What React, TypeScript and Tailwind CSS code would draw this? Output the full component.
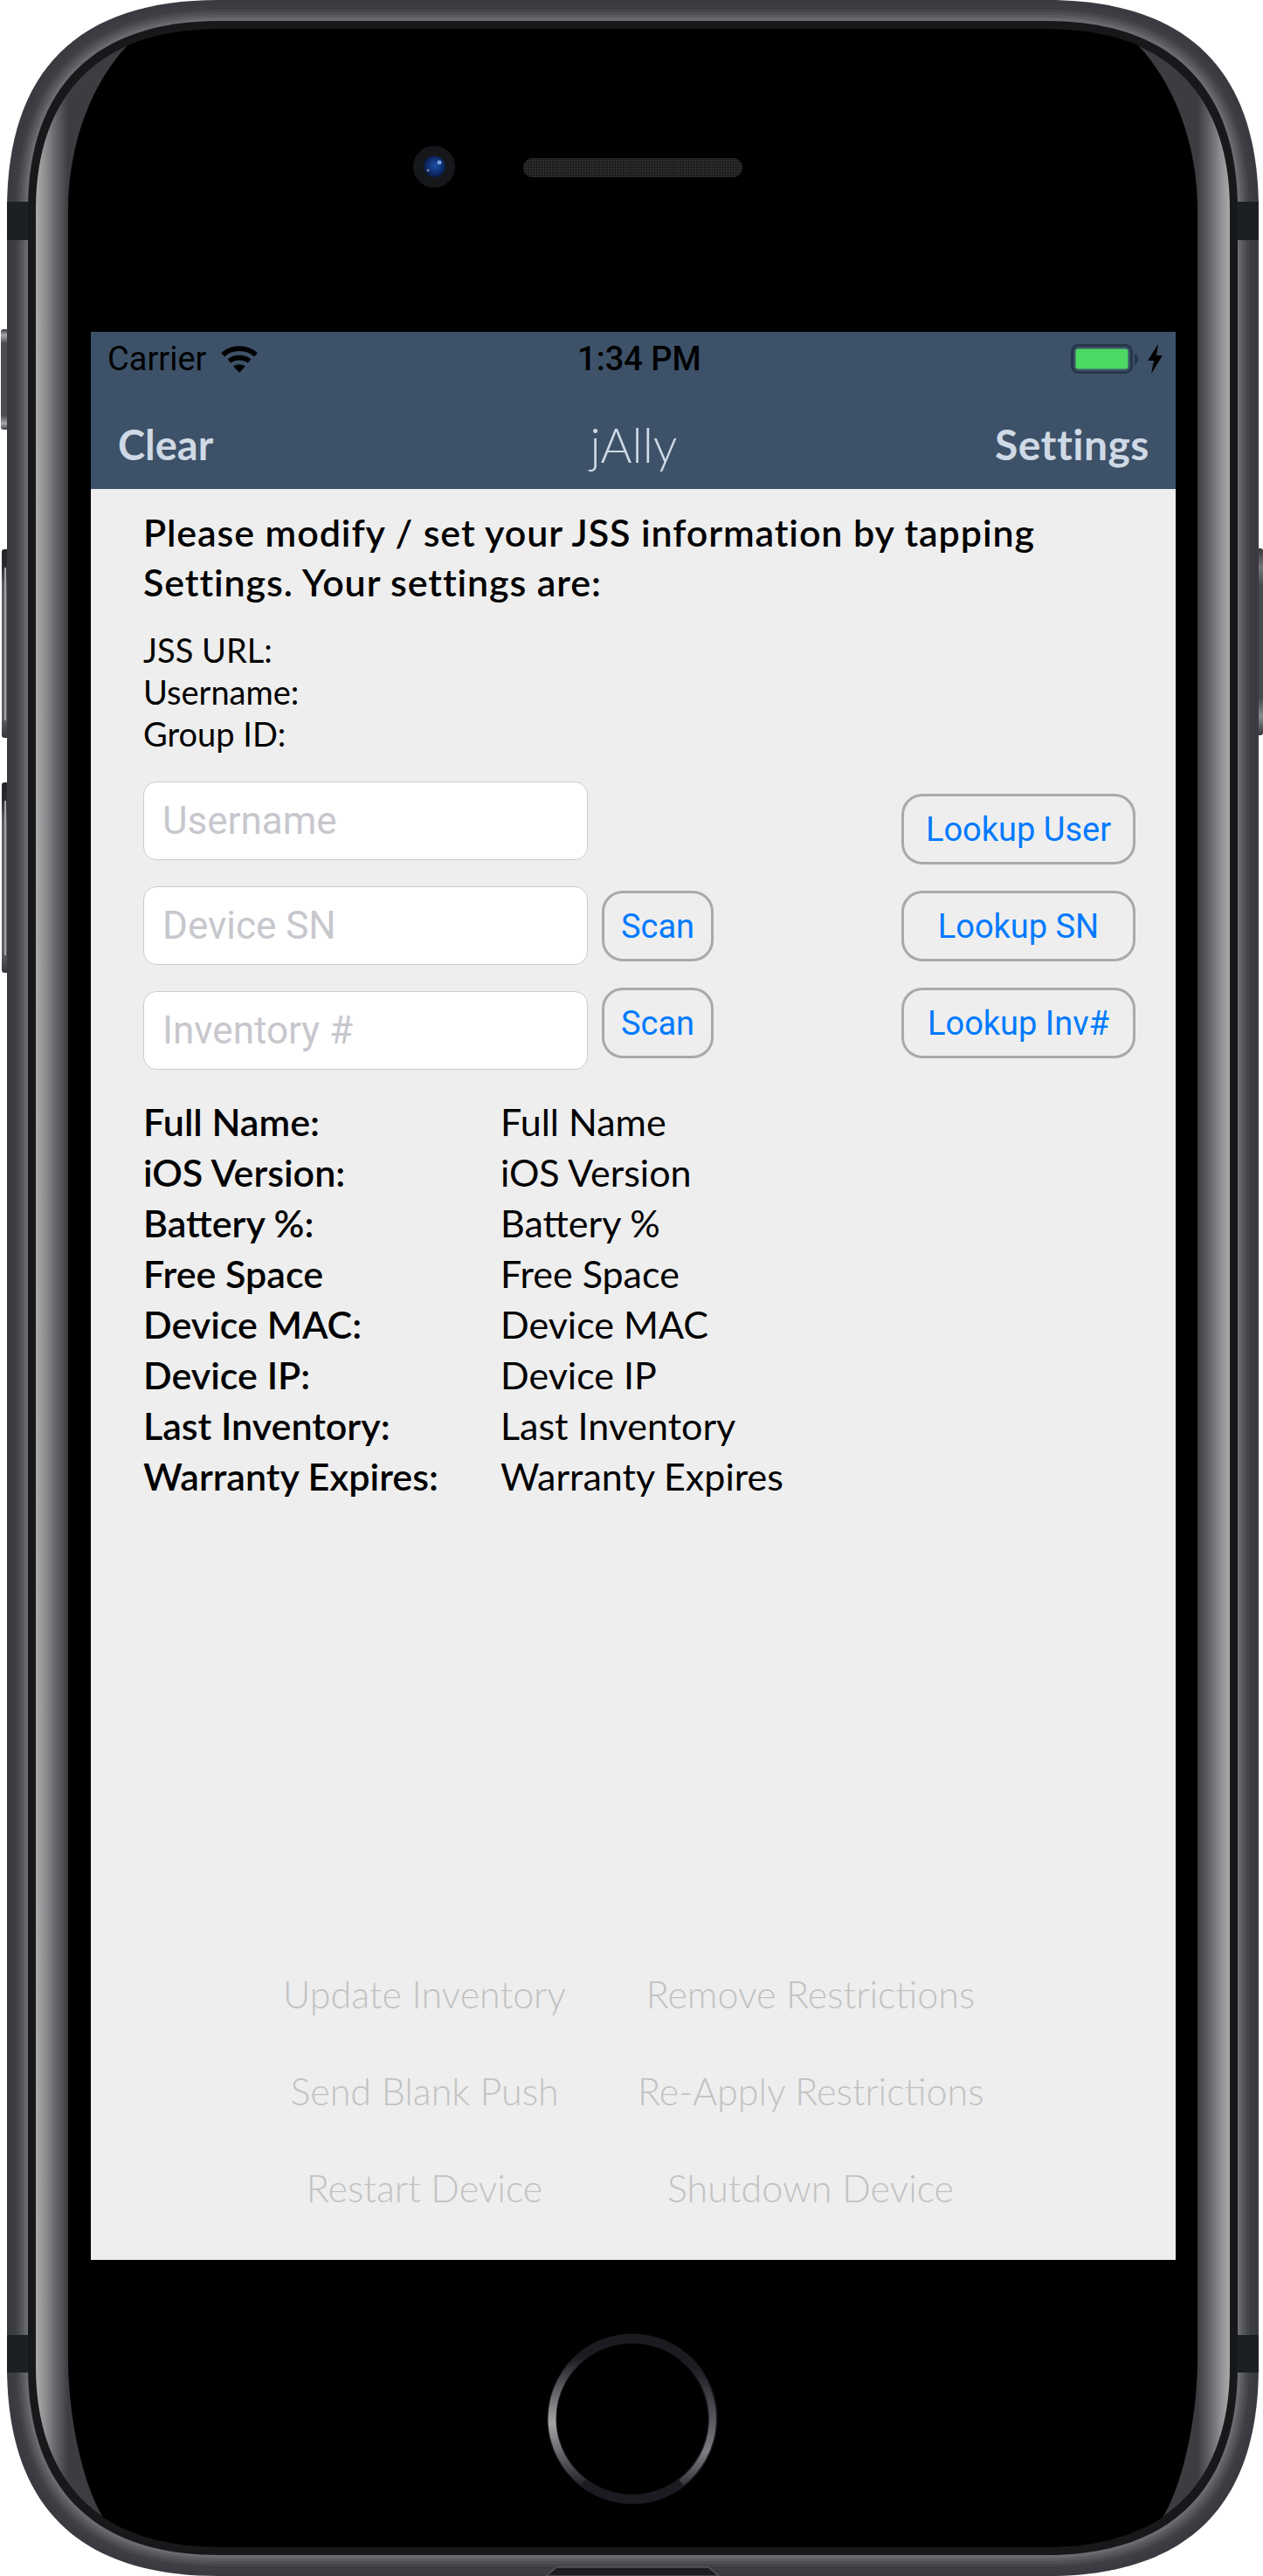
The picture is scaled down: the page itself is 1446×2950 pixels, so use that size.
const avenir = "font-['Lato',sans-serif]";
const system = "font-['Roboto',sans-serif]";

const infoRows = ["JSS URL:", "Username:", "Group ID:"];

const deviceRows = [
  ["Full Name:", "Full Name"],
  ["iOS Version:", "iOS Version"],
  ["Battery %:", "Battery %"],
  ["Free Space", "Free Space"],
  ["Device MAC:", "Device MAC"],
  ["Device IP:", "Device IP"],
  ["Last Inventory:", "Last Inventory"],
  ["Warranty Expires:", "Warranty Expires"],
];

const actions = [
  ["Update Inventory", "Remove Restrictions"],
  ["Send Blank Push", "Re-Apply Restrictions"],
  ["Restart Device", "Shutdown Device"],
];

// outline of the phone body, i pixels in from the outer edge
const bezel = (i: number) => {
  const l = 8 + i;
  const r = 1441 - i;
  const t = i;
  const b = 2950 - i;
  const cy = 80 + i * 0.8;
  const cx = 90 + i * 0.8;
  return `M${l},240 C${l},${cy} ${cx},${t} 250,${t} H1199 C${1449 - cx},${t} ${r},${cy} ${r},240 V2710 C${r},${2950 - cy} ${1449 - cx},${b} 1199,${b} H250 C${cx},${b} ${l},${2950 - cy} ${l},2710 Z`;
};

const bodyBands: [number, string][] = [
  [0, "#3a3b40"],
  [6, "#3d3e43"],
  [11, "#45464a"],
  [14, "#4f5054"],
  [17, "#5a5b5f"],
  [20, "#656669"],
  [22, "#6c6d71"],
];

const PhoneFrame = () => (
  <svg className="absolute inset-0" width="1446" height="2950" viewBox="0 0 1446 2950">
    <defs>
      <linearGradient id="band" gradientUnits="userSpaceOnUse" x1="41" y1="0" x2="1408" y2="0">
        <stop offset="0" stopColor="#ababab" />
        <stop offset="0.008" stopColor="#8d8e90" />
        <stop offset="0.017" stopColor="#636468" />
        <stop offset="0.027" stopColor="#3c3d41" />
        <stop offset="0.973" stopColor="#3c3d41" />
        <stop offset="0.983" stopColor="#636468" />
        <stop offset="0.992" stopColor="#8d8e90" />
        <stop offset="1" stopColor="#ababab" />
      </linearGradient>
      <linearGradient id="volume" x1="0" y1="0" x2="0" y2="1">
        <stop offset="0" stopColor="#252429" />
        <stop offset="0.09" stopColor="#2b2b30" />
        <stop offset="0.2" stopColor="#5c5d62" />
        <stop offset="0.9" stopColor="#5c5d62" />
        <stop offset="1" stopColor="#36363b" />
      </linearGradient>
      <linearGradient id="silent" x1="0" y1="0" x2="0" y2="1">
        <stop offset="0" stopColor="#3a3a3e" />
        <stop offset="0.06" stopColor="#a9a9ac" />
        <stop offset="0.14" stopColor="#4b4c50" />
        <stop offset="0.86" stopColor="#4b4c50" />
        <stop offset="0.94" stopColor="#a9a9ac" />
        <stop offset="1" stopColor="#3a3a3e" />
      </linearGradient>
      <linearGradient id="power" x1="0" y1="0" x2="0" y2="1">
        <stop offset="0" stopColor="#35353a" />
        <stop offset="0.1" stopColor="#76777b" />
        <stop offset="0.2" stopColor="#47484c" />
        <stop offset="0.8" stopColor="#47484c" />
        <stop offset="0.9" stopColor="#8a8b8e" />
        <stop offset="1" stopColor="#35353a" />
      </linearGradient>
      <linearGradient id="homeLeft" gradientUnits="userSpaceOnUse" x1="0" y1="2700" x2="0" y2="2850">
        <stop offset="0" stopColor="#1b1c22" />
        <stop offset="0.5" stopColor="#a5a5a7" />
        <stop offset="1" stopColor="#1b1c22" />
      </linearGradient>
      <linearGradient id="homeRight" gradientUnits="userSpaceOnUse" x1="0" y1="2710" x2="0" y2="2860">
        <stop offset="0" stopColor="#1b1c22" />
        <stop offset="0.65" stopColor="#7d7e82" />
        <stop offset="1" stopColor="#1b1c22" />
      </linearGradient>
      <radialGradient id="lens" cx="0.55" cy="0.45" r="0.6">
        <stop offset="0" stopColor="#1c4fa8" />
        <stop offset="0.7" stopColor="#0c2560" />
        <stop offset="1" stopColor="#0a1226" />
      </radialGradient>
      <pattern id="mesh" width="3" height="3" patternUnits="userSpaceOnUse">
        <rect width="3" height="3" fill="#1d1d1d" />
        <rect width="2" height="2" fill="#2c2c2c" />
      </pattern>
    </defs>

    <rect x="2" y="629" width="12" height="216" rx="3" fill="url(#volume)" />
    <rect x="2" y="896" width="12" height="218" rx="3" fill="url(#volume)" />
    <rect x="5" y="650" width="2" height="175" fill="#a5a5a8" />
    <rect x="5" y="917" width="2" height="177" fill="#a5a5a8" />
    <rect x="1" y="377" width="11" height="115" rx="3" fill="url(#silent)" />
    <rect x="1435" y="628" width="11" height="214" rx="3" fill="url(#power)" />

    {bodyBands.map(([i, color]) => (
      <path key={i} d={bezel(i)} fill={color} />
    ))}

    <rect x="8" y="231" width="24" height="44" fill="#1c2025" />
    <rect x="1417" y="231" width="24" height="44" fill="#1c2025" />
    <rect x="8" y="2674" width="24" height="43" fill="#1c2025" />
    <rect x="1417" y="2674" width="24" height="43" fill="#1c2025" />

    <path d="M625,2950 L637,2940 H811 L823,2950 Z" fill="#1b1c1d" stroke="#55565a" strokeWidth="1.5" />

    <path d={bezel(24)} fill="#17181a" />
    <path d={bezel(33)} fill="url(#band)" />
    <path
      d="M78,240 C78,165 105,95 146,52 C175,39.5 210,33 250,33 H1199 C1239,33 1274,39.5 1303,52 C1344,95 1371,165 1371,240 V2700 C1371,2770 1354,2845 1331,2883 C1297,2905 1253,2917 1199,2917 H250 C196,2917 152,2905 118,2883 C95,2845 78,2770 78,2700 Z"
      fill="#000000"
    />

    <ellipse cx="497" cy="191" rx="24" ry="24" fill="#16171a" />
    <circle cx="497" cy="191" r="12.5" fill="url(#lens)" />
    <circle cx="503" cy="186" r="2.5" fill="#6f9fd8" />
    <circle cx="490" cy="195" r="1.5" fill="#7f8794" />
    <rect x="599" y="181" width="251" height="22" rx="11" fill="url(#mesh)" />

    <circle cx="724" cy="2770" r="92" fill="none" stroke="#1b1c22" strokeWidth="11" />
    <path d="M668,2697 A92,92 0 0,0 668,2843" fill="none" stroke="url(#homeLeft)" strokeWidth="9" />
    <path d="M790,2706 A92,92 0 0,1 780,2843" fill="none" stroke="url(#homeRight)" strokeWidth="8" />
  </svg>
);

const StatusBar = () => (
  <div className={`${system} grid h-[60px] grid-cols-3 items-center pl-[19px] pr-[15px] pt-[2px] text-[38px] text-black`}>
    <div className="flex items-center gap-[16px]">
      <span>Carrier</span>
      <svg width="44" height="32" viewBox="0 0 42 30">
        <path d="M3,10.5 C13,1.5 29,1.5 39,10.5" fill="none" stroke="#000" strokeWidth="5.5" />
        <path d="M10,17.5 C16,12.5 26,12.5 32,17.5" fill="none" stroke="#000" strokeWidth="5.5" />
        <path d="M21,30 L14.5,23 C18,20.5 24,20.5 27.5,23 Z" fill="#000" />
      </svg>
    </div>
    <div className="pl-[10px] text-center font-medium">1:34 PM</div>
    <div className="flex items-center justify-end gap-[10px]">
      <svg width="78" height="34" viewBox="0 0 78 34">
        <rect x="1.5" y="1.5" width="68" height="31" rx="7" fill="none" stroke="#283649" strokeWidth="3" />
        <rect x="5.5" y="5.5" width="60" height="23" rx="3" fill="#4cd964" />
        <path d="M73,11 C76,12 77,14 77,17 C77,20 76,22 73,24 Z" fill="#283649" />
      </svg>
      <svg width="17" height="34" viewBox="0 0 17 34">
        <path d="M12,0 L0,19 L7,19 L4,34 L17,13 L10,13 Z" fill="#000" />
      </svg>
    </div>
  </div>
);

const NavBar = () => (
  <div className={`${avenir} grid h-[120px] grid-cols-3 items-center pl-[31px] pr-[30px] pt-[18px] text-[#cfd9e5]`}>
    <div className="text-[47px] font-bold">Clear</div>
    <div className="text-center text-[55px] font-light">jAlly</div>
    <div className="text-right text-[48px] font-bold tracking-[0.5px]">Settings</div>
  </div>
);

const OutlineButton = ({ label, width }: { label: string; width: string }) => (
  <button
    className={`${system} ${width} h-[81px] rounded-[24px] border-[3px] border-[#a9a9a9] text-center text-[38px] leading-[74px] text-[#007aff]`}
  >
    {label}
  </button>
);

const FieldBox = ({ placeholder }: { placeholder: string }) => (
  <input
    placeholder={placeholder}
    className={`${system} h-[90px] w-[509px] rounded-[15px] border border-[#cccccc] bg-white px-[21px] text-[44px] outline-none placeholder:text-[#c7c7cd]`}
  />
);

export default function App() {
  return (
    <div className="relative h-[2950px] w-[1446px] overflow-hidden bg-white pl-[104px] pt-[380px]">
      <PhoneFrame />
      <div className="relative flex h-[2208px] w-[1242px] flex-col bg-[#eeeeee] text-black">
        <div className="bg-[#3d5269]">
          <StatusBar />
          <NavBar />
        </div>

        <div className={`${avenir} pl-[60px] pt-[21px]`}>
          <p className="w-[1100px] text-[43px] font-semibold leading-[57px] tracking-[0.9px]">
            Please modify / set your JSS information by tapping Settings. Your settings are:
          </p>
          <div className="mt-[25px] text-[38px] leading-[48px]">
            {infoRows.map((row) => (
              <div key={row}>{row}</div>
            ))}
          </div>
        </div>

        <div className="mt-[31px] flex pl-[60px]">
          <div className="flex flex-col gap-[30px]">
            <FieldBox placeholder="Username" />
            <div className="flex gap-[16px]">
              <FieldBox placeholder="Device SN" />
              <div className="pt-[5px]">
                <OutlineButton label="Scan" width="w-[128px]" />
              </div>
            </div>
            <div className="flex gap-[16px]">
              <FieldBox placeholder="Inventory #" />
              <div className="-mt-[4px]">
                <OutlineButton label="Scan" width="w-[128px]" />
              </div>
            </div>
          </div>
          <div className="ml-[215px] flex flex-col gap-[30px] pt-[14px]">
            <OutlineButton label="Lookup User" width="w-[268px]" />
            <OutlineButton label="Lookup SN" width="w-[268px]" />
            <OutlineButton label="Lookup Inv#" width="w-[268px]" />
          </div>
        </div>

        <div className={`${avenir} mt-[31px] pl-[60px] text-[43px] leading-[58px]`}>
          {deviceRows.map(([label, value]) => (
            <div key={label} className="flex">
              <div className="w-[409px] font-semibold">{label}</div>
              <div>{value}</div>
            </div>
          ))}
        </div>

        <div className={`${avenir} mt-auto flex flex-col gap-[55px] pb-[54px] text-[43px] font-light leading-[56px] text-[#c2c2c2]`}>
          {actions.map(([left, right]) => (
            <div key={left} className="flex whitespace-nowrap">
              <div className="ml-[184px] w-[396px] text-center">{left}</div>
              <div className="ml-[46px] w-[396px] text-center">{right}</div>
            </div>
          ))}
        </div>
      </div>
    </div>
  );
}
